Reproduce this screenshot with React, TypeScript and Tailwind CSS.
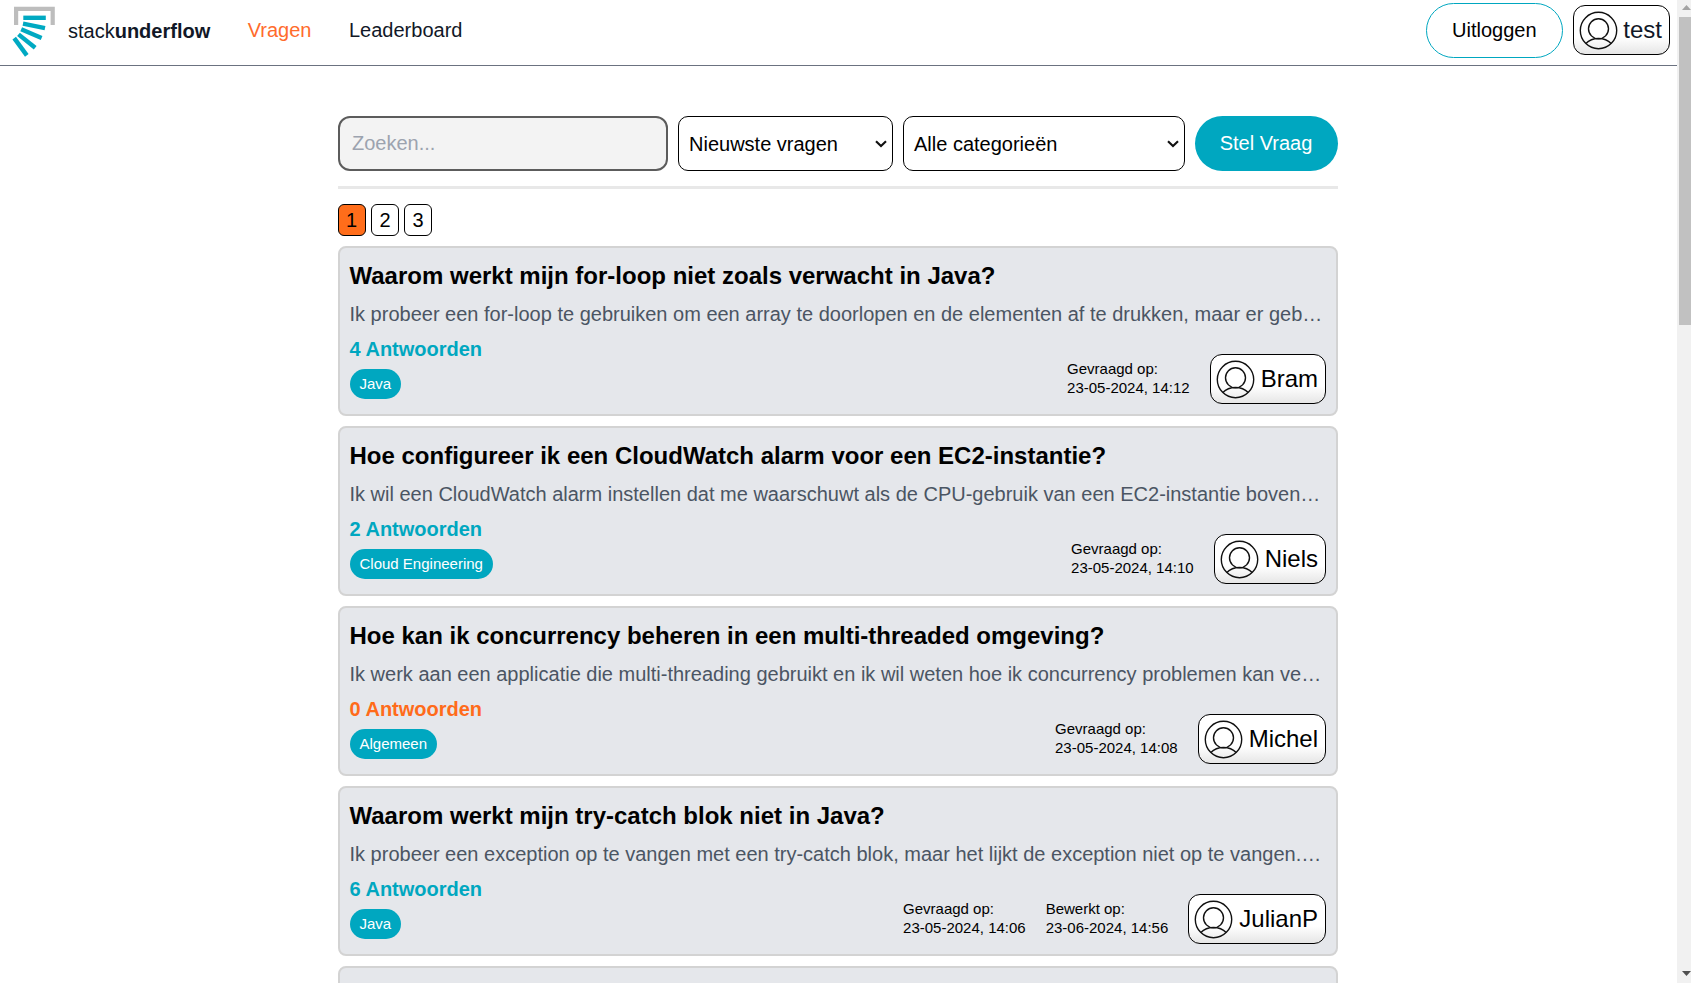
import { ReactNode } from "react";

type Question = {
  title: string;
  body: string;
  answers: number;
  category: string;
  asked: string;
  edited?: string;
  author: string;
};

const questions: Question[] = [
  {
    title: "Waarom werkt mijn for-loop niet zoals verwacht in Java?",
    body: "Ik probeer een for-loop te gebruiken om een array te doorlopen en de elementen af te drukken, maar er gebeurt niets.",
    answers: 4,
    category: "Java",
    asked: "23-05-2024, 14:12",
    author: "Bram",
  },
  {
    title: "Hoe configureer ik een CloudWatch alarm voor een EC2-instantie?",
    body: "Ik wil een CloudWatch alarm instellen dat me waarschuwt als de CPU-gebruik van een EC2-instantie boven 80% komt.",
    answers: 2,
    category: "Cloud Engineering",
    asked: "23-05-2024, 14:10",
    author: "Niels",
  },
  {
    title: "Hoe kan ik concurrency beheren in een multi-threaded omgeving?",
    body: "Ik werk aan een applicatie die multi-threading gebruikt en ik wil weten hoe ik concurrency problemen kan vermijden.",
    answers: 0,
    category: "Algemeen",
    asked: "23-05-2024, 14:08",
    author: "Michel",
  },
  {
    title: "Waarom werkt mijn try-catch blok niet in Java?",
    body: "Ik probeer een exception op te vangen met een try-catch blok, maar het lijkt de exception niet op te vangen. Wat doe ik fout?",
    answers: 6,
    category: "Java",
    asked: "23-05-2024, 14:06",
    edited: "23-06-2024, 14:56",
    author: "JulianP",
  },
];

function Logo() {
  return (
    <svg className="mt-[6px] ml-3 h-[52px] w-[43px] shrink-0 self-start" viewBox="0 0 43 52">
      <path d="M4.1 19V2.8H40.7V19" fill="none" stroke="#bdbdbd" strokeWidth="4.2" />
      <g stroke="#00a9c2" strokeWidth="4.4" fill="none">
        <path d="M11.3 11.8H33.8" />
        <path d="M11 17.7L33 22.2" />
        <path d="M9.2 23.3L29.6 32" />
        <path d="M6.5 28.4L23.2 41.8" />
        <path d="M2.2 32.1L14.8 49.4" />
      </g>
    </svg>
  );
}

function UserBadge({ name, gap = "mr-[6px]" }: { name: string; gap?: string }) {
  return (
    <div className="flex h-[50px] shrink-0 items-center rounded-[12px] border border-black bg-linear-to-b from-white from-65% to-[#e6e6e6] pr-[7px] pl-[5px] text-2xl">
      <svg className={`size-[39px] shrink-0 ${gap}`} viewBox="0 0 39 39" fill="none" stroke="#111" strokeWidth="1.4">
        <circle cx="19.5" cy="19.5" r="18.2" />
        <circle cx="19.5" cy="17.8" r="10" />
        <path d="M6.8 32.4C13.3 25.8 25.7 25.8 32.2 32.4" />
      </svg>
      {name}
    </div>
  );
}

function Select({ className, children }: { className: string; children: ReactNode }) {
  return (
    <div className={`flex h-[55px] items-center justify-between rounded-[10px] border border-black pt-px pr-[5px] pl-[10px] text-xl ${className}`}>
      {children}
      <svg className="h-[8px] w-[12px]" viewBox="0 0 12 8" fill="none" stroke="#111" strokeWidth="2.1">
        <path d="M1 1.2L6 6L11 1.2" />
      </svg>
    </div>
  );
}

function DateStamp({ label, value }: { label: string; value: string }) {
  return (
    <div className="mr-5 pb-[2px] text-[15px] leading-[19px]">
      <p>{label}</p>
      <p>{value}</p>
    </div>
  );
}

function QuestionCard({ q }: { q: Question }) {
  return (
    <article className="relative h-[170px] shrink-0 rounded-lg border-2 border-[#d3d3d3] bg-[#e5e7eb] pt-[11px] pr-[12px] pl-[9.5px]">
      <h2 className="text-2xl leading-[34px] font-bold whitespace-nowrap">{q.title}</h2>
      <p className="mt-[6px] truncate text-xl leading-[30px] text-[#4b5563]">{q.body}</p>
      <p className={`mt-[5px] text-xl leading-[30px] font-bold ${q.answers ? "text-[#00a7c0]" : "text-[#ff6b1a]"}`}>
        {q.answers} Antwoorden
      </p>
      <span className="mt-[5px] ml-[0.5px] inline-flex h-[30px] items-center rounded-full bg-[#00a7c0] pr-[10px] pl-[9.5px] text-[15px] text-white">
        {q.category}
      </span>
      <div className="absolute right-[10px] bottom-[10px] flex items-center">
        <DateStamp label="Gevraagd op:" value={q.asked} />
        {q.edited && <DateStamp label="Bewerkt op:" value={q.edited} />}
        <UserBadge name={q.author} />
      </div>
    </article>
  );
}

export default function App() {
  return (
    <div className="flex h-[983px] w-full overflow-hidden bg-white font-['Liberation_Sans',Arial,sans-serif] text-black">
      <div className="flex min-w-0 flex-1 flex-col">
        <header className="flex h-[66px] shrink-0 items-center border-b border-[#6b7280] pr-[7px] pb-[5px] text-xl text-[#111827]">
          <Logo />
          <span className="ml-[13px] pt-[2px] text-xl">
            stack<b>underflow</b>
          </span>
          <nav className="ml-[37.5px] flex gap-[37.5px]">
            <a className="text-[#ff6b2c]">Vragen</a>
            <a>Leaderboard</a>
          </nav>
          <button className="ml-auto h-[55px] w-[137px] rounded-full border border-[#00a7c0] pr-px text-black">Uitloggen</button>
          <div className="ml-[10px]">
            <UserBadge name="test" gap="mr-[5px]" />
          </div>
        </header>
        <main className="ml-[338px] flex w-[1000px] flex-col pt-[50px]">
          <div className="flex gap-[10px]">
            <input
              className="h-[55px] w-[330px] rounded-[12px] border-2 border-[#5c5c5c] bg-[#f3f3f3] px-3 text-xl placeholder:text-[#9ca3af]"
              placeholder="Zoeken..."
            />
            <Select className="w-[215px]">Nieuwste vragen</Select>
            <Select className="w-[282px]">Alle categorieën</Select>
            <button className="h-[55px] w-[143px] rounded-full bg-[#00a7c0] pr-px pb-[2px] text-xl text-white">Stel Vraag</button>
          </div>
          <hr className="mt-[15px] border-t-[3px] border-[#e8e8e8]" />
          <div className="mt-[15px] flex gap-[5px] text-xl">
            <button className="h-8 w-7 rounded-md border border-black bg-[#ff6d1a] pr-px">1</button>
            <button className="h-8 w-7 rounded-md border border-black">2</button>
            <button className="h-8 w-7 rounded-md border border-black">3</button>
          </div>
          <section className="mt-[10px] flex flex-col gap-[10px]">
            {questions.map((q) => (
              <QuestionCard key={q.title} q={q} />
            ))}
            <div className="h-[170px] shrink-0 rounded-lg border-2 border-[#d3d3d3] bg-[#e5e7eb]" />
          </section>
        </main>
      </div>
      <div className="flex w-[14px] shrink-0 flex-col items-end bg-[#f1f1f1]">
        <svg className="mt-[5px] h-[5px] w-[9px]" viewBox="0 0 9 5">
          <path d="M0 5L4.5 0L9 5Z" fill="#a3a3a3" />
        </svg>
        <div className="mt-[7px] h-[308px] w-[12px] bg-[#c1c1c1]" />
        <svg className="mt-auto mb-[7px] h-[5px] w-[9px]" viewBox="0 0 9 5">
          <path d="M0 0L4.5 5L9 0Z" fill="#505050" />
        </svg>
      </div>
    </div>
  );
}
